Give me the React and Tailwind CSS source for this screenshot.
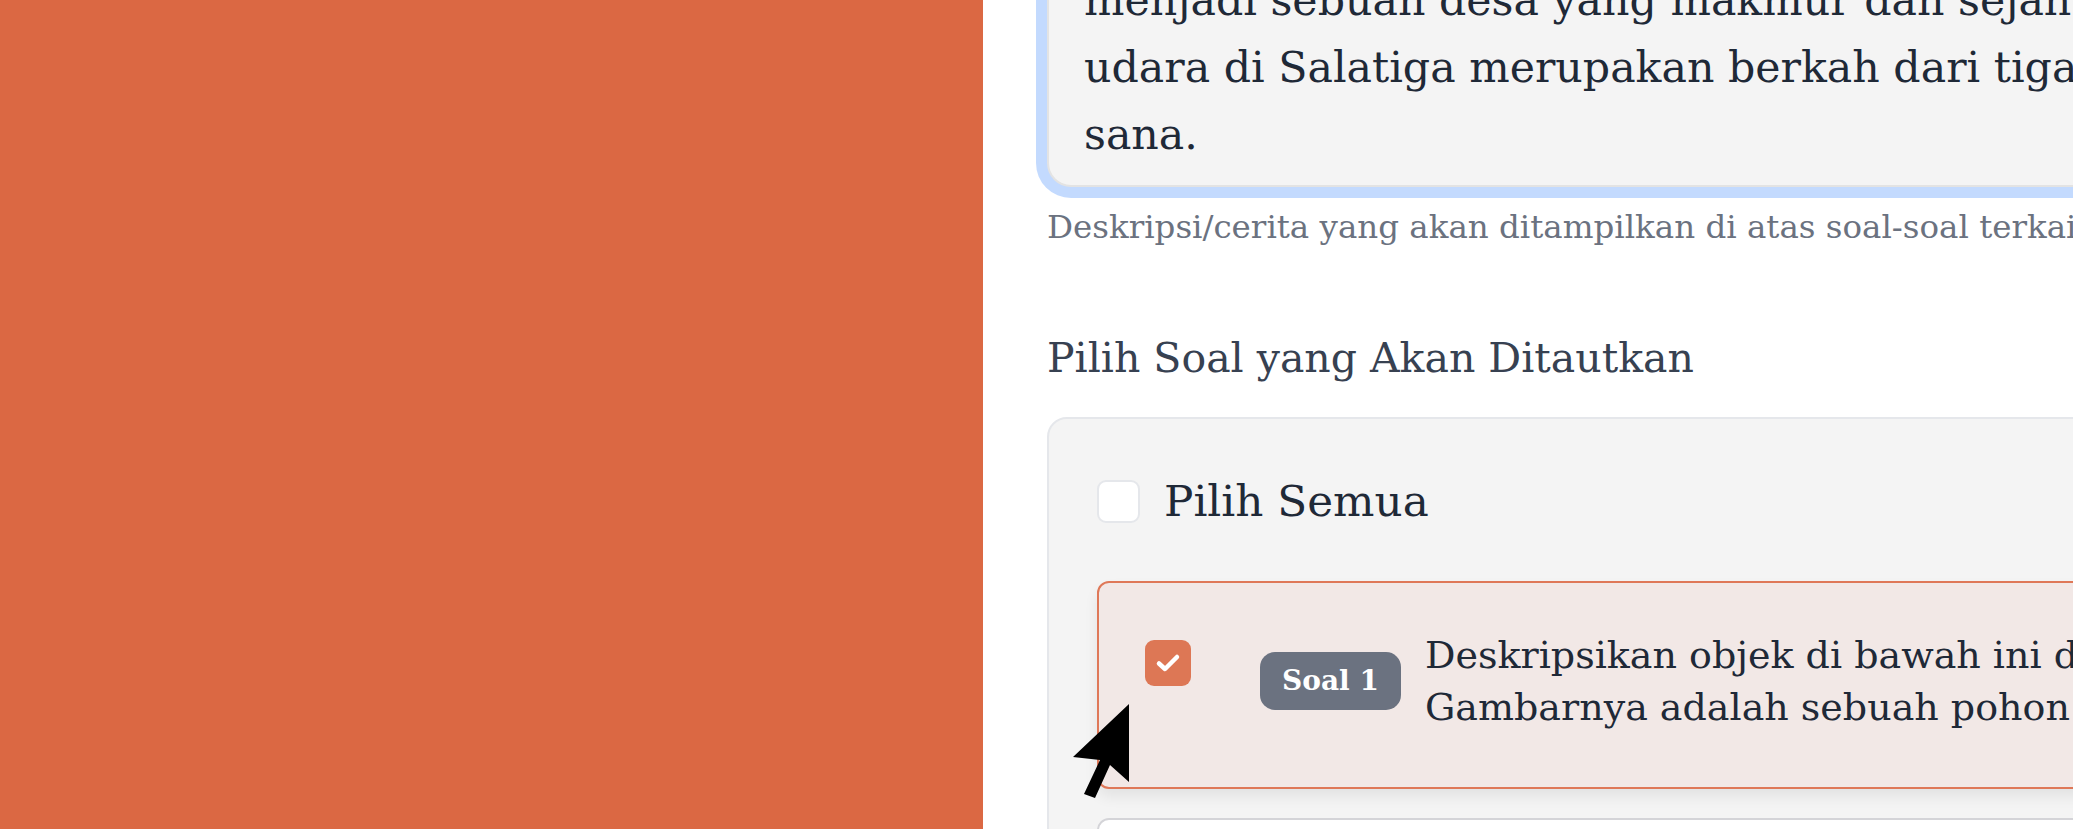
export default function App() {
  const serif = { fontFamily: '"DejaVu Serif", "Liberation Serif", serif' };
  return (
    <div className="relative flex w-[2073px] h-[829px] overflow-hidden bg-white" style={serif}>
      <div className="w-[983px] shrink-0 h-full bg-[#db6843]" />
      <div className="flex-1 min-w-0 h-full overflow-hidden pl-[64px]">
        <div className="w-[1800px]">
          {/* textarea */}
          <div className="mt-[-53px] rounded-b-[24px] rounded-t-[24px] border-2 border-[#e3e3e3] bg-[#f4f4f4] ring-[11px] ring-[#c3dafe] pl-[35px] pt-[18px] pb-[17px] text-[42.7px] leading-[67px] text-[#1f2937] whitespace-nowrap">
            <div>menjadi sebuah desa yang makmur dan sejahtera. Konon, kesejukan</div>
            <div>udara di Salatiga merupakan berkah dari tiga gunung yang ada di</div>
            <div>sana.</div>
          </div>
          <p className="mt-[20px] text-[32.5px] leading-[40px] text-[#6b7280] whitespace-nowrap">
            Deskripsi/cerita yang akan ditampilkan di atas soal-soal terkait.
          </p>
          <h3 className="mt-[83px] text-[41px] leading-[56px] text-[#374151] whitespace-nowrap">
            Pilih Soal yang Akan Ditautkan
          </h3>
          {/* card */}
          <div className="mt-[31px] rounded-tl-[20px] rounded-tr-[20px] border-2 border-[#e5e7eb] bg-[#f4f4f4] pl-[48px] pt-[52px] pb-[40px]">
            <div className="flex items-center gap-[24px]">
              <div className="w-[43px] h-[43px] rounded-[9px] border-2 border-[#e5e7eb] bg-white shrink-0" />
              <span className="text-[43.7px] leading-[60px] text-[#1f2937] whitespace-nowrap">Pilih Semua</span>
            </div>
            {/* selected item */}
            <div className="mt-[50px] rounded-[12px] border-2 border-[#df7858] bg-[#f2e8e6] pl-[46px] pt-[46px] pb-[54px] shadow-[0_8px_14px_rgba(0,0,0,0.07)]">
              <div className="flex items-start">
                <div className="mt-[11px] w-[46px] h-[46px] rounded-[9px] bg-[#dd7755] flex items-center justify-center shrink-0">
                  <svg width="26" height="20" viewBox="0 0 26 20">
                    <path d="M4 10.5 L10 16 L22 4" fill="none" stroke="white" strokeWidth="4.5" strokeLinecap="round" strokeLinejoin="round" />
                  </svg>
                </div>
                <div className="ml-[69px] flex items-center gap-[24px]">
                  <span className="shrink-0 h-[58px] w-[141px] rounded-[15px] bg-[#6b7280] text-white font-bold text-[28px] flex items-center justify-center whitespace-nowrap">Soal 1</span>
                  <div className="text-[38px] leading-[52px] text-[#1f2937] whitespace-nowrap">
                    <div>Deskripsikan objek di bawah ini dengan singkat dan jelas!</div>
                    <div>Gambarnya adalah sebuah pohon mangga yang berbuah lebat.</div>
                  </div>
                </div>
              </div>
            </div>
            {/* next item */}
            <div className="mt-[29px] h-[160px] rounded-[12px] border-2 border-[#d4d4d8] bg-white" />
          </div>
        </div>
      </div>
      {/* cursor overlay */}
      <svg className="absolute left-[1060px] top-[690px]" width="80" height="120" viewBox="0 0 80 120">
        <polygon points="69,14 69,92 50,75 35,108 24,104 40,70 13,67" fill="black" />
      </svg>
    </div>
  );
}
